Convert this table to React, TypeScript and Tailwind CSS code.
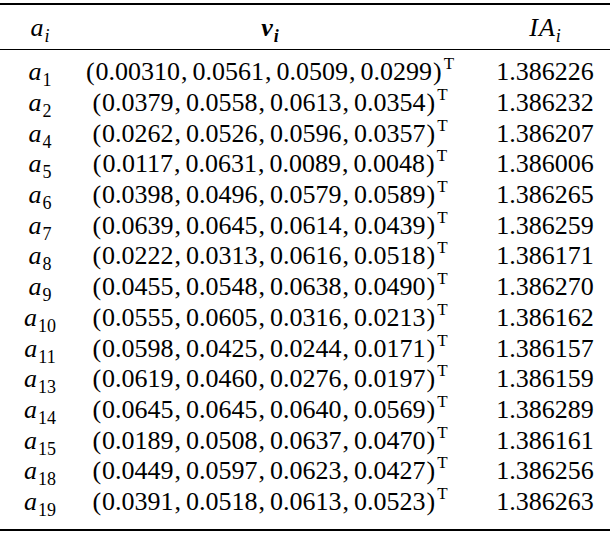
/** 权重向量与 IA 值表格（LaTeX booktabs 风格）。 */

const rows: { i: string; v: string[]; ia: string }[] = [
  { i: '1', v: ['0.00310', '0.0561', '0.0509', '0.0299'], ia: '1.386226' },
  { i: '2', v: ['0.0379', '0.0558', '0.0613', '0.0354'], ia: '1.386232' },
  { i: '4', v: ['0.0262', '0.0526', '0.0596', '0.0357'], ia: '1.386207' },
  { i: '5', v: ['0.0117', '0.0631', '0.0089', '0.0048'], ia: '1.386006' },
  { i: '6', v: ['0.0398', '0.0496', '0.0579', '0.0589'], ia: '1.386265' },
  { i: '7', v: ['0.0639', '0.0645', '0.0614', '0.0439'], ia: '1.386259' },
  { i: '8', v: ['0.0222', '0.0313', '0.0616', '0.0518'], ia: '1.386171' },
  { i: '9', v: ['0.0455', '0.0548', '0.0638', '0.0490'], ia: '1.386270' },
  { i: '10', v: ['0.0555', '0.0605', '0.0316', '0.0213'], ia: '1.386162' },
  { i: '11', v: ['0.0598', '0.0425', '0.0244', '0.0171'], ia: '1.386157' },
  { i: '13', v: ['0.0619', '0.0460', '0.0276', '0.0197'], ia: '1.386159' },
  { i: '14', v: ['0.0645', '0.0645', '0.0640', '0.0569'], ia: '1.386289' },
  { i: '15', v: ['0.0189', '0.0508', '0.0637', '0.0470'], ia: '1.386161' },
  { i: '18', v: ['0.0449', '0.0597', '0.0623', '0.0427'], ia: '1.386256' },
  { i: '19', v: ['0.0391', '0.0518', '0.0613', '0.0523'], ia: '1.386263' },
]

/** 数学斜体字母加下标。 */
function Sub({ base, sub, bold = false }: { base: string; sub: string; bold?: boolean }) {
  const numeric = /^\d+$/.test(sub)
  return (
    <span className={bold ? 'italic font-bold' : 'italic'}>
      {base}
      <span className={'text-[18px] relative top-[6px] ml-[1px] ' + (numeric ? 'not-italic' : '')}>{sub}</span>
    </span>
  )
}

/** 向量 (x, y, z, w)^T。 */
function Vec({ v }: { v: string[] }) {
  return (
    <span className="whitespace-nowrap">
      <span className="mr-[1px]">(</span>
      {v.map((x, k) => (
        <span key={k}>
          {x}
          {k < v.length - 1 && <span className="ml-[1px] mr-[5px]">,</span>}
        </span>
      ))}
      <span className="ml-[1px]">)</span>
      <span className="text-[17px] relative -top-[11px] ml-[2px]">T</span>
    </span>
  )
}

export default function App() {
  return (
    <div className="w-[610px] h-[538px] bg-white text-black text-[26px] pt-[3px] font-['Liberation_Serif']">
      <div className="h-[2px] bg-black" />
      <div className="flex items-center h-[44px]">
        <div className="w-[80px] text-center">
          <Sub base="a" sub="i" />
        </div>
        <div className="w-[380px] text-center">
          <Sub base="v" sub="i" bold />
        </div>
        <div className="ml-auto w-[130px] text-center italic">
          I<span className="ml-[1px]">A</span>
          <span className="text-[18px] relative top-[6px] ml-[1px]">i</span>
        </div>
      </div>
      <div className="h-[1px] bg-black" />
      <div className="pt-[7px] pb-[12px]">
        {rows.map((r) => (
          <div key={r.i} className="flex items-center h-[30.7px] leading-none">
            <div className="w-[80px] text-center">
              <Sub base="a" sub={r.i} />
            </div>
            <div className="w-[380px] text-center">
              <Vec v={r.v} />
            </div>
            <div className="ml-auto w-[130px] text-center">{r.ia}</div>
          </div>
        ))}
      </div>
      <div className="h-[2px] bg-black" />
    </div>
  )
}
